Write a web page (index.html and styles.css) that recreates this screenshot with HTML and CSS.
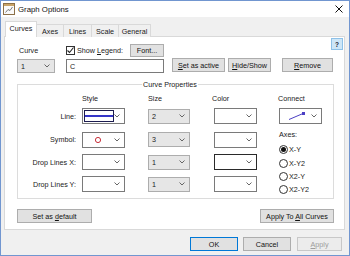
FILE: index.html
```html
<!DOCTYPE html>
<html>
<head>
<meta charset="utf-8">
<title>Graph Options</title>
<link rel="stylesheet" href="styles.css">
</head>
<body>
<div class="window">
  <div class="titlebar">
    <svg class="app-icon" width="12" height="12" viewBox="0 0 12 12">
      <rect x="0.5" y="0.5" width="11" height="11" fill="#fafafa" stroke="#8c7048"/>
      <rect x="1" y="1" width="10" height="2" fill="#c9a468"/>
      <path d="M2.5 9.5 L5 6.5 L7 7.5 L9.5 4" fill="none" stroke="#7a7a7a" stroke-width="1"/>
    </svg>
    <span class="title">Graph Options</span>
    <svg class="close" width="8" height="8" viewBox="0 0 8 8">
      <path d="M0.5 0.5 L7.5 7.5 M7.5 0.5 L0.5 7.5" stroke="#111" stroke-width="1"/>
    </svg>
  </div>

  <div class="tabs">
    <div class="tab active">Curves</div>
    <div class="tab t-axes">Axes</div>
    <div class="tab t-lines">Lines</div>
    <div class="tab t-scale">Scale</div>
    <div class="tab t-general">General</div>
  </div>

  <div class="panel">
    <div class="help">?</div>

    <div class="row row1">
      <span class="lbl-curve">Curve</span>
      <span class="check">
        <svg width="9" height="9" viewBox="0 0 9 9"><path d="M1.5 4.5 L3.5 6.5 L7.5 1.5" fill="none" stroke="#222" stroke-width="1.1"/></svg>
      </span>
      <span class="legend-lbl">Show <u>L</u>egend:</span>
      <div class="btn b-font"><span>Font...</span></div>
    </div>

    <div class="row row2">
      <div class="combo gray c-curve"><span class="val">1</span><svg class="chev" width="6" height="4" viewBox="0 0 6 4"><path d="M0.5 0.5 L3 3 L5.5 0.5" fill="none" stroke="#666"/></svg></div>
      <div class="textbox">C</div>
      <div class="btn b-active"><span><u>S</u>et as active</span></div>
      <div class="btn b-hide"><span><u>H</u>ide/Show</span></div>
      <div class="btn b-remove"><span><u>R</u>emove</span></div>
    </div>

    <div class="group">
      <span class="group-title">Curve Properties</span>
      <div class="props">
        <span></span>
        <span class="hdr">Style</span>
        <span class="hdr">Size</span>
        <span class="hdr h-color">Color</span>
        <span class="hdr h-connect">Connect</span>

        <span class="rlbl">Line:</span>
        <div class="combo white tall"><span class="linesample"><span class="blueline"></span></span><svg class="chev" width="6" height="4" viewBox="0 0 6 4"><path d="M0.5 0.5 L3 3 L5.5 0.5" fill="none" stroke="#666"/></svg></div>
        <div class="combo gray"><span class="val">2</span><svg class="chev" width="6" height="4" viewBox="0 0 6 4"><path d="M0.5 0.5 L3 3 L5.5 0.5" fill="none" stroke="#666"/></svg></div>
        <div class="combo white tall c-color"><svg class="chev" width="6" height="4" viewBox="0 0 6 4"><path d="M0.5 0.5 L3 3 L5.5 0.5" fill="none" stroke="#666"/></svg></div>
        <div class="combo white tall c-connect">
          <svg class="connect-icon" width="20" height="10" viewBox="0 0 20 10"><path d="M1 8.5 L15 2.5" stroke="#4b3fc4" stroke-width="1"/><rect x="14" y="1" width="3" height="3" fill="#4b3fc4"/></svg>
          <svg class="chev" width="6" height="4" viewBox="0 0 6 4"><path d="M0.5 0.5 L3 3 L5.5 0.5" fill="none" stroke="#666"/></svg>
        </div>

        <span class="rlbl">Symbol:</span>
        <div class="combo white tall"><svg class="symbol" width="8" height="8" viewBox="0 0 8 8"><circle cx="4" cy="4" r="2.6" fill="none" stroke="#c8323c" stroke-width="1"/></svg><svg class="chev" width="6" height="4" viewBox="0 0 6 4"><path d="M0.5 0.5 L3 3 L5.5 0.5" fill="none" stroke="#666"/></svg></div>
        <div class="combo gray"><span class="val">3</span><svg class="chev" width="6" height="4" viewBox="0 0 6 4"><path d="M0.5 0.5 L3 3 L5.5 0.5" fill="none" stroke="#666"/></svg></div>
        <div class="combo white tall c-color"><svg class="chev" width="6" height="4" viewBox="0 0 6 4"><path d="M0.5 0.5 L3 3 L5.5 0.5" fill="none" stroke="#666"/></svg></div>

        <div class="axes">
          <span class="axes-lbl">Axes:</span>
          <div class="radio"><span class="dot on"></span>X-Y</div>
          <div class="radio"><span class="dot"></span>X-Y2</div>
          <div class="radio"><span class="dot"></span>X2-Y</div>
          <div class="radio"><span class="dot"></span>X2-Y2</div>
        </div>

        <span class="rlbl">Drop Lines X:</span>
        <div class="combo white tall"><svg class="chev" width="6" height="4" viewBox="0 0 6 4"><path d="M0.5 0.5 L3 3 L5.5 0.5" fill="none" stroke="#666"/></svg></div>
        <div class="combo gray"><span class="val">1</span><svg class="chev" width="6" height="4" viewBox="0 0 6 4"><path d="M0.5 0.5 L3 3 L5.5 0.5" fill="none" stroke="#666"/></svg></div>
        <div class="combo white tall c-color focus"><svg class="chev" width="6" height="4" viewBox="0 0 6 4"><path d="M0.5 0.5 L3 3 L5.5 0.5" fill="none" stroke="#666"/></svg></div>

        <span class="rlbl">Drop Lines Y:</span>
        <div class="combo white tall"><svg class="chev" width="6" height="4" viewBox="0 0 6 4"><path d="M0.5 0.5 L3 3 L5.5 0.5" fill="none" stroke="#666"/></svg></div>
        <div class="combo gray"><span class="val">1</span><svg class="chev" width="6" height="4" viewBox="0 0 6 4"><path d="M0.5 0.5 L3 3 L5.5 0.5" fill="none" stroke="#666"/></svg></div>
        <div class="combo white tall c-color"><svg class="chev" width="6" height="4" viewBox="0 0 6 4"><path d="M0.5 0.5 L3 3 L5.5 0.5" fill="none" stroke="#666"/></svg></div>
      </div>
    </div>

    <div class="row row-bottom">
      <div class="btn b-default"><span>Set as <u>d</u>efault</span></div>
      <div class="btn b-all"><span>Apply To <u>A</u>ll Curves</span></div>
    </div>
  </div>

  <div class="footer">
    <div class="btn b-ok"><span>OK</span></div>
    <div class="btn b-cancel"><span>Cancel</span></div>
    <div class="btn b-apply disabled"><span><u>A</u>pply</span></div>
  </div>
</div>
</body>
</html>
```

FILE: styles.css
```css
* { box-sizing: border-box; }

body {
  margin: 0;
  font-family: "Liberation Sans", Arial, sans-serif;
  font-size: 7.2px;
  color: #1a1a1a;
  background: #fff;
}

u { text-decoration: underline; text-underline-offset: 1px; }

.window {
  width: 350px;
  height: 256px;
  border: 1px solid #7196d0;
  background: #f0f0f0;
  display: flex;
  flex-direction: column;
}

/* title bar */
.titlebar {
  height: 16px;
  flex: none;
  background: #fff;
  display: flex;
  align-items: center;
  padding: 0 6px 0 2px;
}
.app-icon { flex: none; }
.title {
  margin-left: 3px;
  font-size: 7.8px;
  color: #111;
}
.close { margin-left: auto; }

/* tabs */
.tabs {
  flex: none;
  height: 16px;
  margin-top: 4px;
  margin-bottom: -1px;
  padding-left: 4px;
  display: flex;
  align-items: flex-end;
  position: relative;
  z-index: 1;
}
.tab {
  height: 13px;
  border: 1px solid #d9d9d9;
  border-bottom: none;
  margin-left: -1px;
  background: #f0f0f0;
  display: flex;
  align-items: center;
  justify-content: center;
}
.tab.active {
  height: 16px;
  width: 32px;
  margin-left: 0;
  background: #fff;
  padding-bottom: 2px;
}
.t-axes { width: 28px; }
.t-lines { width: 29px; }
.t-scale { width: 28px; }
.t-general { width: 33px; }

/* panel */
.panel {
  flex: none;
  position: relative;
  height: 194px;
  margin: 0 4px 0 3px;
  background: #fff;
  border: 1px solid #d9d9d9;
}
.help {
  position: absolute;
  top: 1px;
  right: 1px;
  width: 12px;
  height: 12px;
  background: #cde6f7;
  border: 1px solid #8ec1e8;
  font-size: 6.5px;
  font-weight: bold;
  color: #223;
  display: flex;
  align-items: center;
  justify-content: center;
}

.row { display: flex; }

.row1 {
  margin-top: 7px;
  height: 13px;
  align-items: center;
}
.lbl-curve { margin-left: 14px; width: 47px; }
.check {
  width: 9px;
  height: 9px;
  border: 1px solid #333;
  background: #fff;
  display: flex;
  align-items: center;
  justify-content: center;
}
.check svg { flex: none; }
.legend-lbl { margin-left: 2px; width: 53px; }

.btn {
  height: 14px;
  background: #e1e1e1;
  border: 1px solid #adadad;
  display: flex;
  align-items: center;
  justify-content: center;
  color: #111;
  white-space: nowrap;
}
.b-font { width: 34px; height: 13px; }

.row2 {
  margin-top: 1px;
  height: 15px;
}
.combo {
  position: relative;
  height: 14px;
  display: flex;
  align-items: center;
}
.combo .chev {
  position: absolute;
  right: 4px;
  top: 50%;
  margin-top: -2px;
}
.combo .val { margin-left: 3px; }
.combo.gray {
  width: 42px;
  background: #e6e6e6;
  border: 1px solid #adadad;
}
.combo.white {
  width: 43px;
  background: #fff;
  border: 1px solid #7a7a7a;
}
.combo.tall { height: 16px; }
.combo.focus { border-color: #2a2a2a; }

.c-curve { width: 38px !important; margin-left: 12px; margin-top: 1px; }
.textbox {
  margin-left: 11px;
  margin-top: 1px;
  width: 98px;
  height: 14px;
  border: 1px solid #7a7a7a;
  background: #fff;
  display: flex;
  align-items: center;
  padding-left: 3px;
}
.b-active { margin-left: 8px; width: 53px; }
.b-hide { margin-left: 3px; width: 43px; }
.b-remove { margin-left: 11px; width: 51px; }

/* group box */
.group {
  position: relative;
  margin: 11px 0 0 12px;
  width: 317px;
  height: 115px;
  border: 1px solid #dcdcdc;
}
.group-title {
  position: absolute;
  top: -5px;
  left: 124px;
  padding: 0 1px;
  background: #fff;
  line-height: 9px;
}
.props {
  margin-top: 7px;
  display: grid;
  grid-template-columns: 64px 66px 66px 65px 50px;
  grid-template-rows: 12px 24px 23px 22px 22px;
  align-items: center;
}
.hdr { align-self: center; }
.h-color { margin-left: -2px; }
.h-connect { margin-left: -1px; }
.rlbl {
  text-align: right;
  padding-right: 6px;
}
.props .combo.gray { height: 15px; }

.linesample {
  margin-left: 1px;
  width: 30px;
  height: 12px;
  border: 1px solid #1c1c50;
  display: flex;
  align-items: center;
}
.blueline {
  display: block;
  width: 100%;
  height: 2px;
  background: #3535c8;
}
.symbol { margin-left: 11px; }
.connect-icon { margin-left: 8px; }

.axes {
  grid-column: 5;
  grid-row: 3 / 6;
  align-self: start;
  padding-top: 2px;
  display: flex;
  flex-direction: column;
}
.axes-lbl { line-height: 10px; margin-bottom: 3px; }
.radio {
  height: 13.4px;
  display: flex;
  align-items: center;
}
.dot {
  width: 9px;
  height: 9px;
  border: 1px solid #333;
  border-radius: 50%;
  margin-right: 1px;
  display: flex;
  align-items: center;
  justify-content: center;
  background: #fff;
}
.dot.on::after {
  content: "";
  width: 5px;
  height: 5px;
  border-radius: 50%;
  background: #111;
}

.row-bottom {
  margin: 10px 0 0 12px;
  width: 317px;
  justify-content: space-between;
}
.b-default { width: 75px; }
.b-all { width: 74px; }

/* footer */
.footer {
  flex: none;
  margin-top: 7px;
  padding-right: 7px;
  display: flex;
  justify-content: flex-end;
  gap: 5px;
}
.b-ok { width: 48px; border-color: #0078d7; }
.b-cancel { width: 48px; }
.b-apply { width: 45px; margin-left: 1px; }
.btn.disabled {
  background: #ececec;
  border-color: #c8c8c8;
  color: #9d9d9d;
}
```
